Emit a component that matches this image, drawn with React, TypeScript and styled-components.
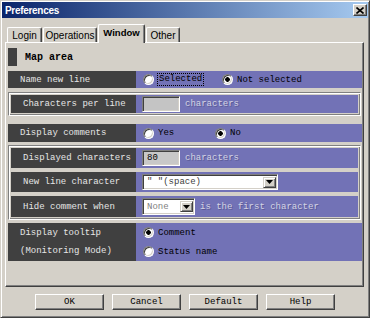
import React from 'react'
import styled, { createGlobalStyle } from 'styled-components'

const FACE = '#d4d0c8'
const DARK = '#404040'
const SHADOW = '#808080'
const LABEL_BG = '#404040'
const VALUE_BG = '#7272b6'
const MONO = '"Liberation Mono", "Courier New", monospace'
const SANS = '"Liberation Sans", Arial, sans-serif'

const GlobalStyle = createGlobalStyle`
  html, body {
    margin: 0;
    padding: 0;
    width: 370px;
    height: 318px;
    overflow: hidden;
    background: ${FACE};
  }
  * {
    box-sizing: border-box;
  }
`

const Window = styled.div`
  width: 370px;
  height: 318px;
  background: ${FACE};
  border: 1px solid;
  border-color: ${FACE} ${DARK} ${DARK} ${FACE};
  box-shadow: inset 1px 1px #fff, inset -1px -1px ${SHADOW};
  padding: 1px;
  display: flex;
  flex-direction: column;
`

const TitleBar = styled.div`
  height: 16px;
  background: linear-gradient(to right, #0a246a, #a6caf0);
  display: flex;
  align-items: center;
  justify-content: space-between;
  padding: 0 1px 0 3px;
`

const Title = styled.span`
  font-family: ${SANS};
  font-weight: bold;
  font-size: 10px;
  letter-spacing: -0.3px;
  color: #fff;
`

const CloseButton = styled.div`
  width: 14px;
  height: 12px;
  background: ${FACE};
  border: 1px solid;
  border-color: #fff ${DARK} ${DARK} #fff;
  box-shadow: inset -1px -1px ${SHADOW};
  display: flex;
  align-items: center;
  justify-content: center;
`

const TabStrip = styled.div`
  display: flex;
  align-items: flex-end;
  margin-top: 6px;
  padding-left: 5px;
`

const Tab = styled.div<{ $w: number; $active?: boolean }>`
  position: relative;
  z-index: ${(p) => (p.$active ? 1 : 0)};
  width: ${(p) => p.$w}px;
  height: ${(p) => (p.$active ? 19 : 15)}px;
  margin-bottom: ${(p) => (p.$active ? -1 : 0)}px;
  margin-right: 1px;
  background: ${FACE};
  border: 1px solid;
  border-bottom: none;
  border-color: #fff ${DARK} ${DARK} #fff;
  box-shadow: inset -1px 0 ${SHADOW};
  border-radius: 2px 2px 0 0;
  display: flex;
  align-items: center;
  justify-content: center;
  padding-bottom: ${(p) => (p.$active ? 3 : 0)}px;
  font-family: ${SANS};
  font-size: ${(p) => (p.$active ? 9.5 : 10)}px;
  font-weight: ${(p) => (p.$active ? 'bold' : 'normal')};
  color: #000;
`

const Panel = styled.div`
  height: 245px;
  margin: 0 4px 0 3px;
  border: 1px solid;
  border-color: #fff ${DARK} ${DARK} #fff;
  box-shadow: inset -1px -1px ${SHADOW};
  padding: 5px 1px 0 2px;
  display: flex;
  flex-direction: column;
`

const SectionHead = styled.div`
  height: 18px;
  display: flex;
  align-items: center;
  gap: 8px;
  font-family: ${MONO};
  font-weight: bold;
  font-size: 10px;
  color: #000;

  &::before {
    content: '';
    width: 9px;
    height: 18px;
    background: ${LABEL_BG};
  }
`

const Row = styled.div<{ $mt?: number; $h: number }>`
  display: flex;
  height: ${(p) => p.$h}px;
  margin-top: ${(p) => p.$mt ?? 0}px;
`

const Label = styled.div<{ $w: number }>`
  width: ${(p) => p.$w}px;
  flex: none;
  background: ${LABEL_BG};
  color: #e6e6e6;
  font-family: ${MONO};
  font-size: 9px;
  line-height: 18px;
  white-space: pre;
  padding-left: 12px;
  display: flex;
  flex-direction: column;
  justify-content: center;
`

const Value = styled.div<{ $column?: boolean }>`
  flex: 1;
  background: ${VALUE_BG};
  display: flex;
  flex-direction: ${(p) => (p.$column ? 'column' : 'row')};
  align-items: ${(p) => (p.$column ? 'flex-start' : 'center')};
  justify-content: center;
  justify-content: ${(p) => (p.$column ? 'center' : 'flex-start')};
  gap: ${(p) => (p.$column ? 6 : 5)}px;
  padding-left: 6px;
`

const Frame = styled.div<{ $mt: number }>`
  margin-top: ${(p) => p.$mt}px;
  margin-right: 1px;
  border: 1px solid;
  border-color: ${SHADOW} #fff #fff ${SHADOW};
  box-shadow: inset 1px 1px #fff, inset -1px -1px ${SHADOW};
  padding: 2px;
  display: flex;
  flex-direction: column;
  gap: 4px;
`

const Option = styled.label<{ $w?: number }>`
  display: flex;
  align-items: center;
  gap: 4px;
  height: 13px;
  width: ${(p) => (p.$w ? `${p.$w}px` : 'auto')};
  margin-left: 1px;
  font-family: ${MONO};
  font-size: 9px;
  color: #000;
`

const Radio = styled.span<{ $on?: boolean }>`
  width: 11px;
  height: 11px;
  flex: none;
  border-radius: 50%;
  border: 1px solid;
  border-color: ${SHADOW} #fff #fff ${SHADOW};
  box-shadow: inset 1px 1px ${DARK}, inset -1px -1px ${FACE};
  background: ${(p) =>
    p.$on ? 'radial-gradient(circle, #000 0 2px, #fff 2.6px)' : '#fff'};
`

const Focus = styled.span`
  outline: 1px dotted #000;
  padding: 0 1px;
  line-height: 11px;
`

const Field = styled.div<{ $w: number; $h: number; $bg: string; $fg?: string }>`
  width: ${(p) => p.$w}px;
  height: ${(p) => p.$h}px;
  flex: none;
  background: ${(p) => p.$bg};
  color: ${(p) => p.$fg ?? '#000'};
  border: 1px solid;
  border-color: ${SHADOW} #fff #fff ${SHADOW};
  box-shadow: inset 1px 1px ${DARK}, inset -1px -1px ${FACE};
  display: flex;
  align-items: center;
  justify-content: space-between;
  padding: 0 1px 0 4px;
  font-family: ${MONO};
  font-size: 9px;
  white-space: pre;
`

const DropButton = styled.span`
  width: 13px;
  height: 11px;
  background: ${FACE};
  border: 1px solid;
  border-color: ${FACE} ${DARK} ${DARK} ${FACE};
  box-shadow: inset 1px 1px #fff, inset -1px -1px ${SHADOW};
  display: flex;
  align-items: center;
  justify-content: center;
`

const Note = styled.span`
  font-family: ${MONO};
  font-size: 9px;
  color: #d4d4e4;
  text-shadow: 1px 1px #5a5a96;
  white-space: pre;
`

const ButtonRow = styled.div`
  display: flex;
  justify-content: center;
  gap: 8px;
  margin-top: 7px;
`

const Button = styled.div`
  width: 69px;
  height: 16px;
  background: ${FACE};
  border: 1px solid;
  border-color: #fff ${DARK} ${DARK} #fff;
  box-shadow: inset -1px -1px ${SHADOW};
  display: flex;
  align-items: center;
  justify-content: center;
  font-family: ${MONO};
  font-size: 9px;
  color: #000;
`

const Arrow = () => (
  <svg width="7" height="4" viewBox="0 0 7 4">
    <path d="M0 0h7L3.5 4z" fill="#000" />
  </svg>
)

const Combo: React.FC<{ w: number; h: number; text: string; fg: string }> = ({ w, h, text, fg }) => (
  <Field $w={w} $h={h} $bg="#fff" $fg={fg}>
    <span>{text}</span>
    <DropButton>
      <Arrow />
    </DropButton>
  </Field>
)

export default function App() {
  return (
    <>
      <GlobalStyle />
      <Window>
        <TitleBar>
          <Title>Preferences</Title>
          <CloseButton>
            <svg width="8" height="7" viewBox="0 0 8 7">
              <path d="M0.5 0.5l7 6M7.5 0.5l-7 6" stroke="#000" strokeWidth="1.6" />
            </svg>
          </CloseButton>
        </TitleBar>

        <TabStrip>
          <Tab $w={35}>Login</Tab>
          <Tab $w={54}>Operations</Tab>
          <Tab $w={47} $active>Window</Tab>
          <Tab $w={34}>Other</Tab>
        </TabStrip>

        <Panel>
          <SectionHead>Map area</SectionHead>

          <Row $mt={5} $h={17}>
            <Label $w={128}>Name new line</Label>
            <Value>
              <Option $w={73}>
                <Radio />
                <Focus>Selected</Focus>
              </Option>
              <Option>
                <Radio $on />
                Not selected
              </Option>
            </Value>
          </Row>

          <Frame $mt={4}>
            <Row $h={18}>
              <Label $w={125}>Characters per line</Label>
              <Value>
                <Field $w={38} $h={16} $bg="#c4c4c4" />
                <Note>characters</Note>
              </Value>
            </Row>
          </Frame>

          <Row $mt={8} $h={18}>
            <Label $w={128}>Display comments</Label>
            <Value>
              <Option $w={66}>
                <Radio />
                Yes
              </Option>
              <Option>
                <Radio $on />
                No
              </Option>
            </Value>
          </Row>

          <Frame $mt={3}>
            <Row $h={20}>
              <Label $w={125}>Displayed characters</Label>
              <Value>
                <Field $w={38} $h={16} $bg="#c8c8c8">80</Field>
                <Note>characters</Note>
              </Value>
            </Row>
            <Row $h={20}>
              <Label $w={125}>New line character</Label>
              <Value>
                <Combo w={136} h={16} text={'" "(space)'} fg="#404040" />
              </Value>
            </Row>
            <Row $h={21}>
              <Label $w={125}>Hide comment when</Label>
              <Value>
                <Combo w={53} h={17} text="None" fg="#808080" />
                <Note>is the first character</Note>
              </Value>
            </Row>
          </Frame>

          <Row $mt={3} $h={38}>
            <Label $w={128}>
              <span>Display tooltip</span>
              <span>(Monitoring Mode)</span>
            </Label>
            <Value $column>
              <Option>
                <Radio $on />
                Comment
              </Option>
              <Option>
                <Radio />
                Status name
              </Option>
            </Value>
          </Row>
        </Panel>

        <ButtonRow>
          <Button>OK</Button>
          <Button>Cancel</Button>
          <Button>Default</Button>
          <Button>Help</Button>
        </ButtonRow>
      </Window>
    </>
  )
}
